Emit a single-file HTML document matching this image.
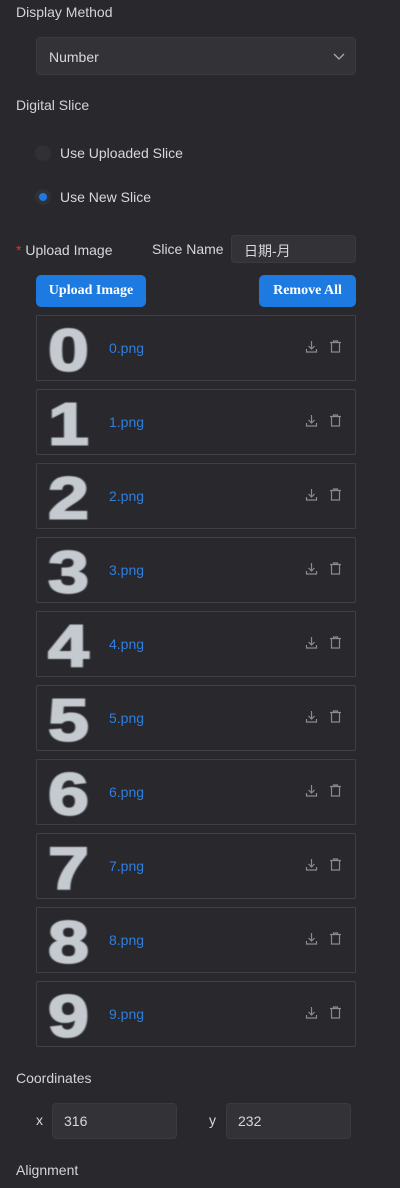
<!DOCTYPE html>
<html><head><meta charset="utf-8"><style>
body{margin:0;width:400px;height:1188px;background:#28282d;font-family:"Liberation Sans","Noto Sans CJK SC",sans-serif;color:#d8d8dc;font-size:14px;position:relative;overflow:hidden}
.a{position:absolute}
.lbl{font-size:14px;color:#d4d4d8}
.inp{background:#333337;border:1px solid #3a3a3f;border-radius:4px;box-sizing:border-box}
.btn{background:#1c7ae0;color:#fff;border-radius:5px;font-family:"Liberation Serif",serif;font-weight:bold;font-size:14px;text-align:center;line-height:32px;height:32px}
.row{position:absolute;left:36px;width:320px;height:66px;border:1px solid #3f3f45;box-sizing:border-box;border-radius:2px}
.dg{position:absolute;left:11px;top:4px;font:900 46px "Liberation Sans",sans-serif;color:#c4cacf;-webkit-text-stroke:1.5px #c4cacf;filter:blur(0.5px);line-height:46px;transform:scale(1.6,1.3);transform-origin:0 0}
.fn{position:absolute;left:72px;top:24px;color:#2f7fe0;font-size:14px}
.ic{position:absolute;top:24px}
</style></head><body>
<div class="a lbl" style="left:16px;top:4px">Display Method</div>
<div class="a inp" style="left:36px;top:37px;width:320px;height:38px"><span class="a" style="left:12px;top:11px">Number</span>
<svg class="a" style="left:296px;top:14px" width="12" height="9" viewBox="0 0 12 9"><path d="M1 2l5 5 5-5" fill="none" stroke="#aaa" stroke-width="1.3"/></svg></div>
<div class="a lbl" style="left:16px;top:97px">Digital Slice</div>
<div class="a" style="left:35px;top:145px;width:16px;height:16px;border-radius:50%;background:#303035"></div>
<div class="a" style="left:60px;top:145px">Use Uploaded Slice</div>
<div class="a" style="left:35px;top:189px;width:16px;height:16px;border-radius:50%;background:#303035"></div>
<div class="a" style="left:39px;top:193px;width:8px;height:8px;border-radius:50%;background:#1c7ae0"></div>
<div class="a" style="left:60px;top:189px">Use New Slice</div>
<div class="a" style="left:16px;top:242px"><span style="color:#e0303a">*</span> Upload Image</div>
<div class="a" style="left:152px;top:241px">Slice Name</div>
<div class="a inp" style="left:231px;top:235px;width:125px;height:28px"><span class="a" style="left:12px;top:5px">日期-月</span></div>
<div class="a btn" style="left:36px;top:275px;width:110px">Upload Image</div>
<div class="a btn" style="left:259px;top:275px;width:97px">Remove All</div>
<div id="rows"></div>
<script>
var h='';for(var i=0;i<10;i++){var t=315+i*74;h+='<div class="row" style="top:'+t+'px"><div class="dg">'+i+'</div><div class="fn">'+i+'.png</div>'+
'<svg class="ic" style="left:268px" width="13" height="13" viewBox="0 0 13 13"><path d="M6.5 1v8M3.5 6l3 3 3-3M1.5 9v3h10V9" fill="none" stroke="#8a8a90" stroke-width="1.2"/></svg>'+
'<svg class="ic" style="left:292px" width="13" height="13" viewBox="0 0 13 13"><path d="M1 2.5h11M4.5 2.5V1h4v1.5M2.5 2.5v9.5h8V2.5" fill="none" stroke="#8a8a90" stroke-width="1.2"/></svg></div>';}
document.getElementById('rows').innerHTML=h;
</script>
<div class="a lbl" style="left:16px;top:1070px">Coordinates</div>
<div class="a" style="left:36px;top:1112px">x</div>
<div class="a inp" style="left:52px;top:1103px;width:125px;height:36px"><span class="a" style="left:11px;top:9px">316</span></div>
<div class="a" style="left:209px;top:1112px">y</div>
<div class="a inp" style="left:226px;top:1103px;width:125px;height:36px"><span class="a" style="left:11px;top:9px">232</span></div>
<div class="a lbl" style="left:16px;top:1162px">Alignment</div>
</body></html>
